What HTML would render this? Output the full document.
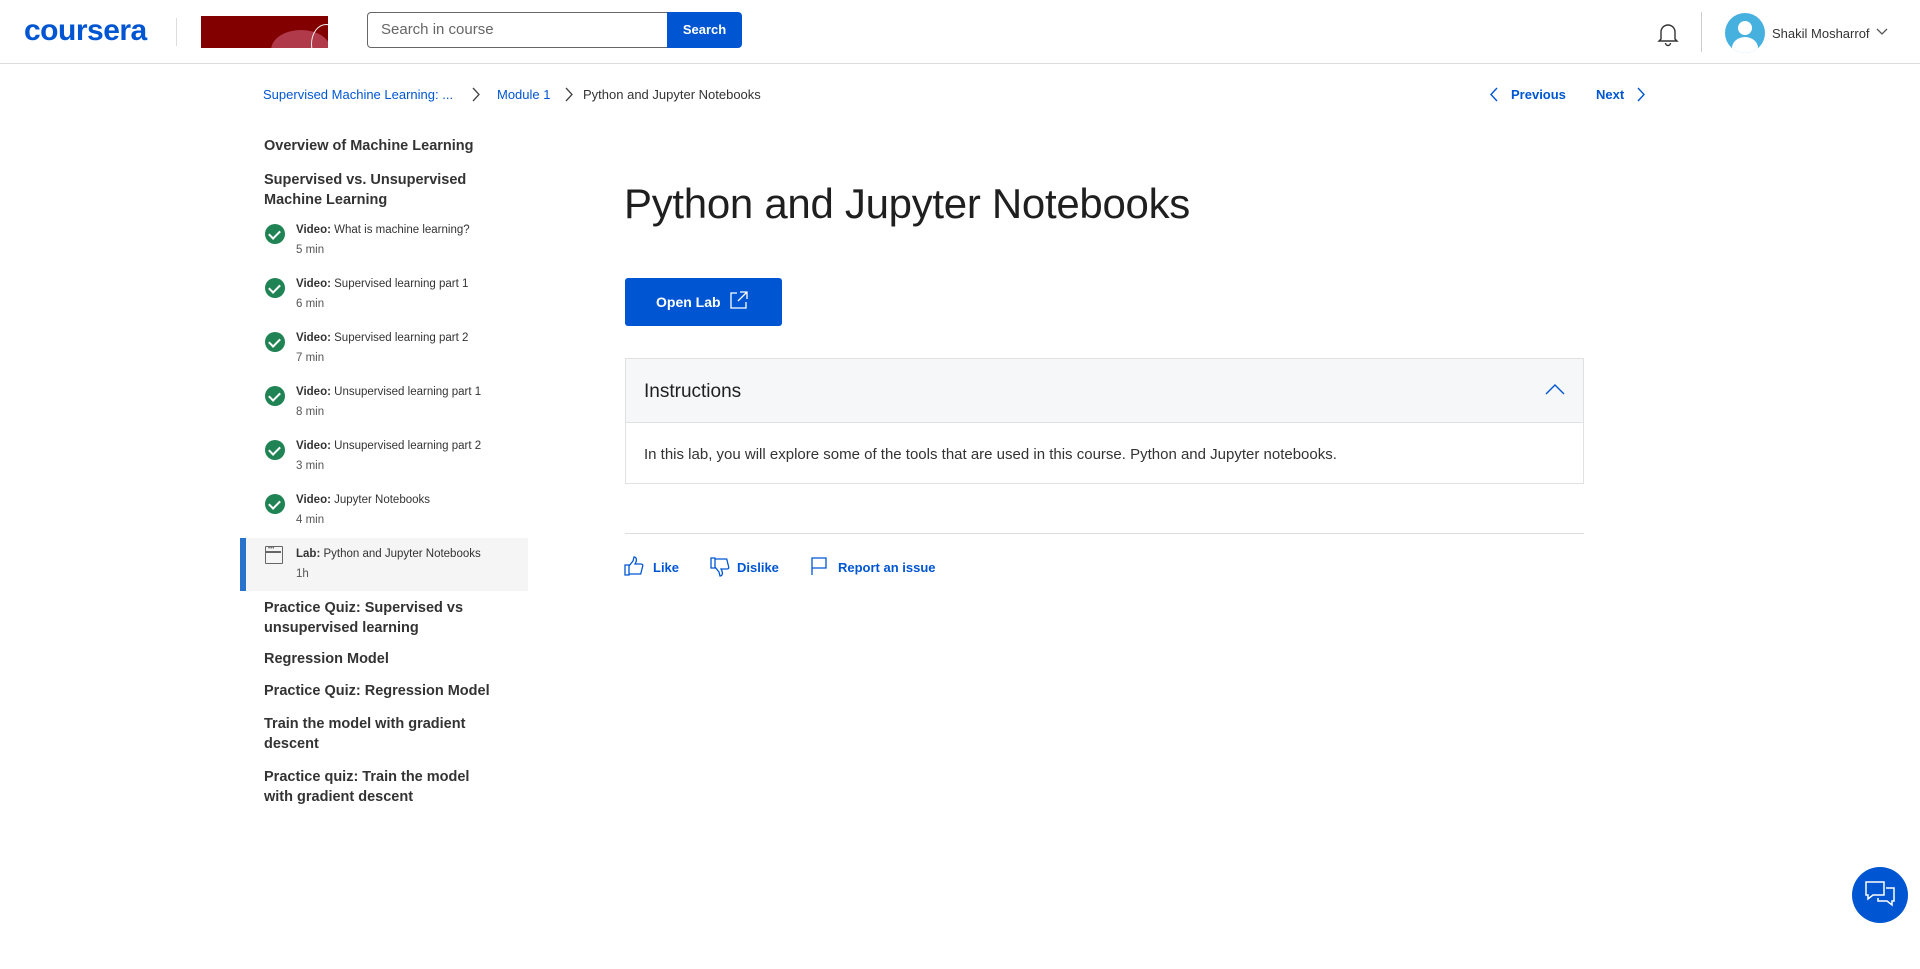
<!DOCTYPE html>
<html><head><meta charset="utf-8"><style>
*{box-sizing:border-box;margin:0;padding:0}
body{width:1920px;height:969px;background:#fff;font-family:"Liberation Sans",sans-serif;color:#1f1f1f;position:relative;overflow:hidden}
.a{position:absolute;white-space:nowrap}
.blue{color:#0056d2}
.sb{font-weight:bold;font-size:14.5px;color:#333}
.it{font-size:11.5px;color:#333}
.it b{font-weight:bold}
.min{font-size:11.5px;color:#555}
.chk{position:absolute;width:20px;height:20px;border-radius:50%;background:#1f8354}
.chk:after{content:"";position:absolute;left:6px;top:4px;width:5px;height:9px;border:solid #fff;border-width:0 2px 2px 0;transform:rotate(45deg)}
</style></head><body>
<div class="a" style="left:0;top:63px;width:1920px;height:1px;background:#ddd"></div>
<div class="a blue" style="left:24px;top:14px;font-size:30px;font-weight:bold;letter-spacing:-0.5px">coursera</div>
<div class="a" style="left:176px;top:18px;width:1px;height:28px;background:#ddd"></div>
<div class="a" style="left:201px;top:16px;width:127px;height:32px;background:#820000;overflow:hidden">
<div style="position:absolute;left:70px;top:14px;width:60px;height:40px;border-radius:50%;background:#b03a4a"></div>
<div style="position:absolute;left:110px;top:8px;width:30px;height:40px;border-radius:50%;border:1px solid #eee"></div></div>
<div class="a" style="left:367px;top:12px;width:301px;height:36px;border:1px solid #666;border-radius:4px 0 0 4px"></div>
<div class="a" style="left:381px;top:21px;font-size:15px;color:#666">Search in course</div>
<div class="a" style="left:667px;top:12px;width:75px;height:36px;background:#0056d2;border-radius:0 4px 4px 0;color:#fff;font-weight:bold;font-size:13px;text-align:center;line-height:36px">Search</div>
<svg class="a" style="left:1656px;top:21px" width="24" height="26" viewBox="0 0 24 26" fill="none" stroke="#333" stroke-width="1.4"><path d="M5 18V11a7 7 0 0 1 14 0v7l2 2H3z"/><path d="M9.5 22a2.5 2.5 0 0 0 5 0"/></svg>
<div class="a" style="left:1701px;top:12px;width:1px;height:40px;background:#ccc"></div>
<div class="a" style="left:1725px;top:13px;width:40px;height:40px;border-radius:50%;background:#46b0df;overflow:hidden">
<div style="position:absolute;left:13px;top:8px;width:14px;height:14px;border-radius:50%;background:#fff"></div>
<div style="position:absolute;left:7px;top:24px;width:26px;height:22px;border-radius:50%;background:#fff"></div></div>
<div class="a" style="left:1772px;top:26px;font-size:13px;color:#333">Shakil Mosharrof</div>
<svg class="a" style="left:1876px;top:28px" width="12" height="8"><path d="M1 1l5 5 5-5" fill="none" stroke="#555" stroke-width="1.3"/></svg>
<div class="a blue" style="left:263px;top:87px;font-size:13px">Supervised Machine Learning: ...</div>
<svg class="a" style="left:472px;top:87px" width="9" height="15"><path d="M1 1l6 6.5L1 14" fill="none" stroke="#444" stroke-width="1.3"/></svg>
<div class="a blue" style="left:497px;top:87px;font-size:13px">Module 1</div>
<svg class="a" style="left:565px;top:87px" width="9" height="15"><path d="M1 1l6 6.5L1 14" fill="none" stroke="#444" stroke-width="1.3"/></svg>
<div class="a" style="left:583px;top:87px;font-size:13px;color:#333">Python and Jupyter Notebooks</div>
<svg class="a" style="left:1489px;top:87px" width="9" height="15"><path d="M8 1L2 7.5 8 14" fill="none" stroke="#0056d2" stroke-width="1.4"/></svg>
<div class="a blue" style="left:1511px;top:87px;font-size:13px;font-weight:bold">Previous</div>
<div class="a blue" style="left:1596px;top:87px;font-size:13px;font-weight:bold">Next</div>
<svg class="a" style="left:1637px;top:87px" width="9" height="15"><path d="M1 1l6 6.5L1 14" fill="none" stroke="#0056d2" stroke-width="1.4"/></svg>
<div class="a sb" style="left:264px;top:138px">Overview of Machine Learning</div>
<div class="a sb" style="left:264px;top:170px;line-height:20px">Supervised vs. Unsupervised<br>Machine Learning</div>
<div class="chk" style="left:265px;top:224px"></div><div class="a it" style="left:296px;top:224px"><b>Video:</b> What is machine learning?</div><div class="a min" style="left:296px;top:244px">5 min</div>
<div class="chk" style="left:265px;top:278px"></div><div class="a it" style="left:296px;top:278px"><b>Video:</b> Supervised learning part 1</div><div class="a min" style="left:296px;top:298px">6 min</div>
<div class="chk" style="left:265px;top:332px"></div><div class="a it" style="left:296px;top:332px"><b>Video:</b> Supervised learning part 2</div><div class="a min" style="left:296px;top:352px">7 min</div>
<div class="chk" style="left:265px;top:386px"></div><div class="a it" style="left:296px;top:386px"><b>Video:</b> Unsupervised learning part 1</div><div class="a min" style="left:296px;top:406px">8 min</div>
<div class="chk" style="left:265px;top:440px"></div><div class="a it" style="left:296px;top:440px"><b>Video:</b> Unsupervised learning part 2</div><div class="a min" style="left:296px;top:460px">3 min</div>
<div class="chk" style="left:265px;top:494px"></div><div class="a it" style="left:296px;top:494px"><b>Video:</b> Jupyter Notebooks</div><div class="a min" style="left:296px;top:514px">4 min</div>
<div class="a" style="left:240px;top:538px;width:288px;height:53px;background:#f5f5f5;border-left:6px solid #2a73cc"></div>
<div class="a" style="left:265px;top:546px;width:18px;height:18px;border:1.5px solid #666;border-radius:1px"><div style="position:absolute;left:0;top:4px;width:15px;height:1.5px;background:#666"></div><div style="position:absolute;left:2px;top:1px;font-size:6px;line-height:3px;color:#666">•••</div></div>
<div class="a it" style="left:296px;top:548px"><b>Lab:</b> Python and Jupyter Notebooks</div><div class="a min" style="left:296px;top:568px">1h</div>
<div class="a sb" style="left:264px;top:598px;line-height:20px">Practice Quiz: Supervised vs<br>unsupervised learning</div>
<div class="a sb" style="left:264px;top:651px">Regression Model</div>
<div class="a sb" style="left:264px;top:683px">Practice Quiz: Regression Model</div>
<div class="a sb" style="left:264px;top:714px;line-height:20px">Train the model with gradient<br>descent</div>
<div class="a sb" style="left:264px;top:767px;line-height:20px">Practice quiz: Train the model<br>with gradient descent</div>
<div class="a" style="left:624px;top:180px;font-size:42px;color:#1f1f1f;letter-spacing:-0.3px">Python and Jupyter Notebooks</div>
<div class="a" style="left:625px;top:278px;width:157px;height:48px;background:#0056d2;border-radius:3px"></div>
<div class="a" style="left:656px;top:294px;font-size:14px;font-weight:bold;color:#fff">Open Lab</div>
<svg class="a" style="left:730px;top:291px" width="18" height="18" fill="none" stroke="#fff" stroke-width="1.3"><path d="M7 2H1v15h15v-6"/><path d="M10 1h7v7M17 1L8 10"/></svg>
<div class="a" style="left:625px;top:358px;width:959px;height:126px;border:1px solid #e1e1e1"></div>
<div class="a" style="left:626px;top:359px;width:957px;height:64px;background:#f5f7f8;border-bottom:1px solid #e1e1e1"></div>
<div class="a" style="left:644px;top:381px;font-size:19px;color:#1f1f1f">Instructions</div>
<svg class="a" style="left:1545px;top:384px" width="20" height="11"><path d="M1 10l9-9 9 9" fill="none" stroke="#0056d2" stroke-width="1.4"/></svg>
<div class="a" style="left:644px;top:446px;font-size:15px;color:#333">In this lab, you will explore some of the tools that are used in this course. Python and Jupyter notebooks.</div>
<div class="a" style="left:625px;top:533px;width:959px;height:1px;background:#ddd"></div>
<svg class="a" style="left:624px;top:556px" width="20" height="20" fill="none" stroke="#0056d2" stroke-width="1.3"><path d="M1 9h4v10H1zM5 10l4-5 1-4c2 0 3 2 2 5l-1 2h6c1.5 0 2 1 1.7 2l-2 8H5"/></svg>
<div class="a blue" style="left:653px;top:560px;font-size:13px;font-weight:bold">Like</div>
<svg class="a" style="left:710px;top:557px" width="20" height="20" fill="none" stroke="#0056d2" stroke-width="1.3"><path d="M1 1h4v10H1zM5 10l4 5 1 4c2 0 3-2 2-5l-1-2h6c1.5 0 2-1 1.7-2l-2-8H5"/></svg>
<div class="a blue" style="left:737px;top:560px;font-size:13px;font-weight:bold">Dislike</div>
<svg class="a" style="left:810px;top:556px" width="18" height="20" fill="none" stroke="#0056d2" stroke-width="1.3"><path d="M2 19V2h14v10H2"/></svg>
<div class="a blue" style="left:838px;top:560px;font-size:13px;font-weight:bold">Report an issue</div>
<div class="a" style="left:1852px;top:867px;width:56px;height:56px;border-radius:50%;background:#0056d2"></div>
<svg class="a" style="left:1864px;top:880px" width="32" height="30" fill="none" stroke="#fff" stroke-width="1.5"><path d="M2 2h18v13H9l-5 4v-4H2z"/><path d="M22 8h8v13h-2v4l-5-4h-9v-3"/></svg>
</body></html>
